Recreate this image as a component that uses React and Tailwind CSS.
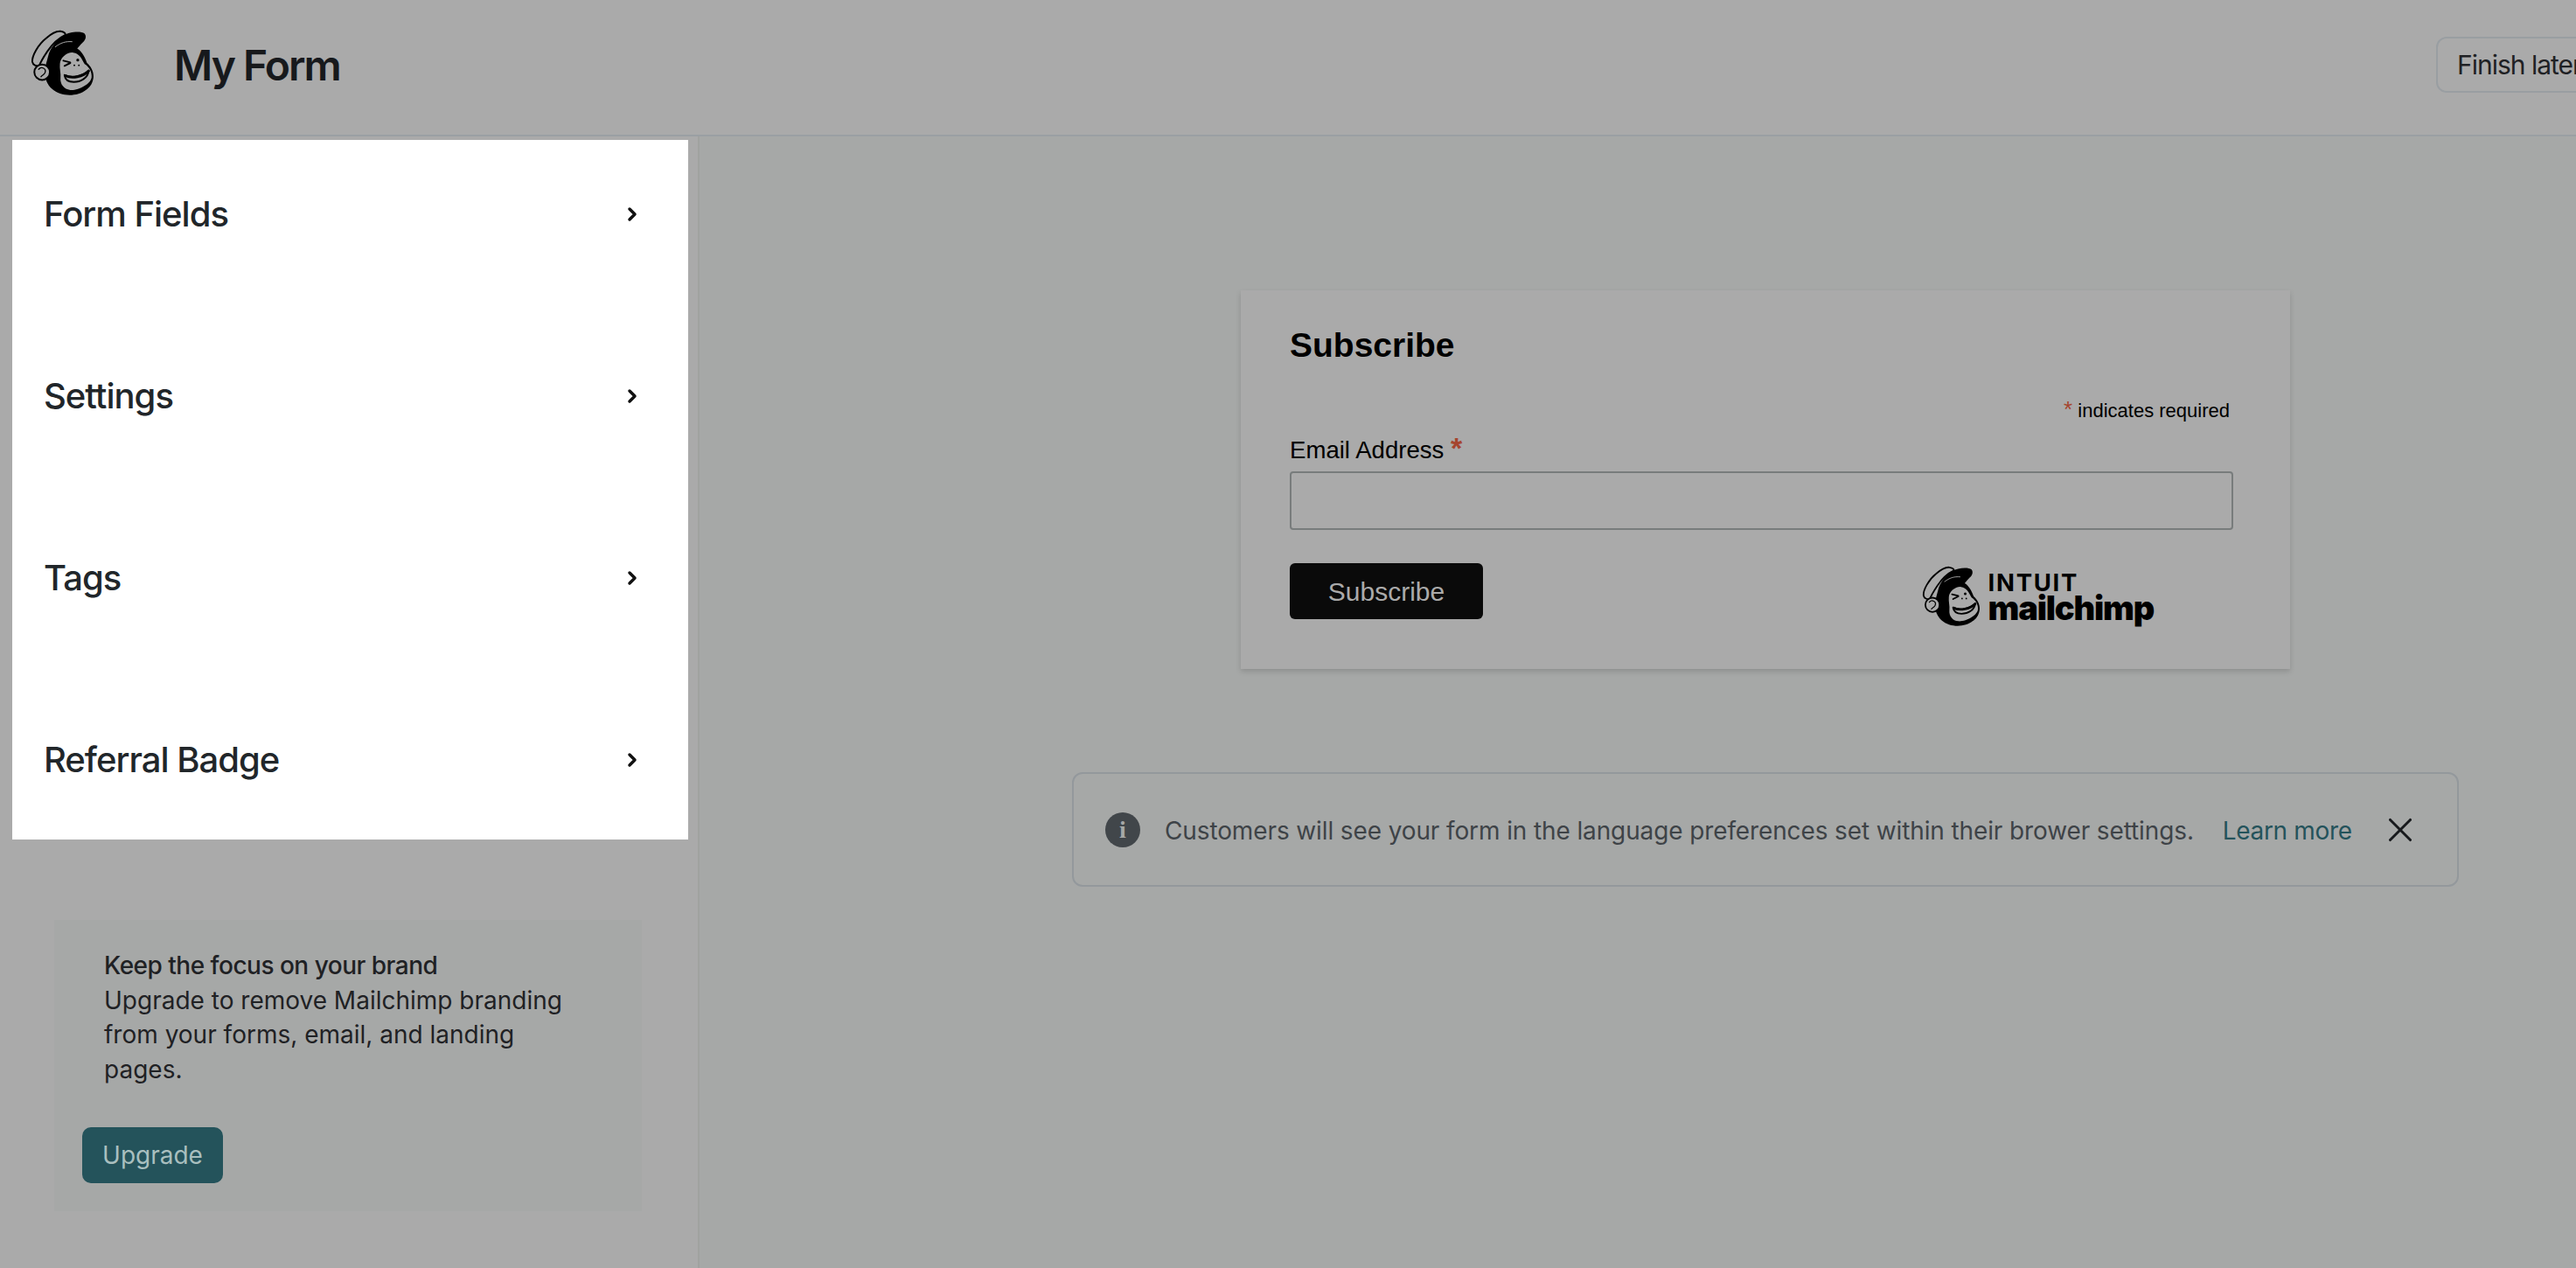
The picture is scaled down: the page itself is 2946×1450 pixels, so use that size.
import { ChevronRight, X } from "lucide-react";

const sections = ["Form Fields", "Settings", "Tags", "Referral Badge"];

// Freddie head, same drawing in the header and the form footer
const Freddie = ({ className }) => (
  <svg className={className} viewBox="-4 -4 222 236" fill="none">
    <path d="M2 110C0 90 22 50 50 28C66 14 84 2 100 4C110 6 118 10 117 16C100 24 74 44 54 74C42 92 30 112 26 124C16 126 4 122 2 110Z" fill="#aaaaaa" stroke="#000" strokeWidth="6" />
    <path d="M112 18C130 6 170 2 184 12C192 22 186 36 176 44C168 52 164 58 158 64C170 70 184 90 192 114C206 126 218 146 214 168C210 190 200 200 188 208C160 230 104 234 70 204C54 190 46 170 46 150C40 150 52 110 60 80C72 50 92 30 112 18Z" fill="#000" />
    <path d="M82 58C100 44 118 38 140 40" stroke="#aaaaaa" strokeWidth="3" strokeLinecap="round" />
    <path d="M98 116C100 96 122 76 144 78C166 80 174 100 184 118C200 128 210 146 208 164C206 186 164 210 134 208C112 206 98 188 100 166C102 150 96 134 98 116Z" fill="#aaaaaa" />
    <circle cx="36" cy="146" r="27" fill="#aaaaaa" stroke="#000" strokeWidth="6" />
    <path d="M24 136C34 124 52 134 46 148C42 156 36 156 32 162" stroke="#000" strokeWidth="4" strokeLinecap="round" />
    <path d="M110 106L134 112M114 124L134 114" stroke="#000" strokeWidth="6" strokeLinecap="round" />
    <circle cx="160" cy="104" r="5" fill="#000" />
    <circle cx="148" cy="122" r="3" fill="#000" />
    <circle cx="164" cy="122" r="3" fill="#000" />
    <path d="M114 156C140 168 178 160 198 140C196 166 170 180 146 180C128 180 116 172 114 156Z" fill="#aaaaaa" stroke="#000" strokeWidth="6" strokeLinejoin="round" />
    <path d="M116 158C140 170 178 162 198 142" stroke="#000" strokeWidth="9" strokeLinecap="round" />
  </svg>
);

const Header = () => (
  <header className="flex h-[156px] items-center border-b-2 border-[#9a9fa3] bg-[#aaaaaa] pb-[6px]">
    <Freddie className="mb-[4px] ml-[35px] h-[78px] w-[73px] shrink-0" />
    <h1 className="ml-[91px] mt-[2px] text-[48px] leading-none font-semibold tracking-[-2px] text-[#17191c]">My Form</h1>
    <button className="ml-auto mr-[-80px] h-[64px] w-[240px] shrink-0 rounded-[12px] border-2 border-[#999ea2] pl-[22px] text-left text-[30px] tracking-[-1px] text-[#1f2124]">
      Finish later
    </button>
  </header>
);

const Sidebar = () => (
  <aside className="w-[800px] shrink-0 border-r-2 border-[#a0a2a0] bg-[#aaaaaa] pl-[14px] pt-[4px]">
    <div className="flex w-[773px] flex-col gap-[38px] bg-white pb-[6px]">
      {sections.map((name) => (
        <div key={name} className="flex h-[170px] items-center justify-between pl-[36px] pr-[52px]">
          <span className="text-[40px] font-medium tracking-[-1px] text-[#21262a]">{name}</span>
          <ChevronRight className="size-[24px] text-[#111]" strokeWidth={3.5} />
        </div>
      ))}
    </div>
    <div className="ml-[48px] mt-[92px] w-[672px] bg-[#a6a8a7] pb-[32px] pl-[32px] pt-[33px]">
      <div className="w-[560px] pl-[25px] text-[28px] leading-[39.5px] text-[#1f2124]">
        <p className="font-medium tracking-[-0.5px]">Keep the focus on your brand</p>
        <p>Upgrade to remove Mailchimp branding from your forms, email, and landing pages.</p>
      </div>
      <button className="mt-[46px] block h-[64px] w-[161px] rounded-[10px] bg-[#24535b] text-[28px] text-[#a9bfbf]">
        Upgrade
      </button>
    </div>
  </aside>
);

const SubscribeCard = () => (
  <div className="ml-[619px] w-[1200px] bg-[#aaaaaa] pb-[47px] pl-[56px] pr-[65px] pt-[40px] font-['Liberation_Sans',sans-serif] text-black shadow-[0_3px_6px_rgba(0,0,0,0.15)]">
    <h2 className="text-[39px] leading-[46px] font-bold">Subscribe</h2>
    <p className="mt-[37px] pr-[4px] text-right text-[22px] leading-[26px]">
      <span className="text-[26px] leading-[26px] text-[#a5452f]">*</span> indicates required
    </p>
    <label className="mt-[11px] block h-[36px] text-[27.6px] leading-[36px]">
      Email Address <span className="text-[34px] leading-[36px] font-bold text-[#a5452f]">*</span>
    </label>
    <div className="mt-[9px] h-[67px] rounded-[4px] border-2 border-[#787c7c]" />
    <div className="mt-[38px] flex items-start justify-between">
      <button className="h-[64px] w-[221px] rounded-[6px] bg-[#0a0a0a] text-[30px] text-[#aaaaaa]">Subscribe</button>
      <div className="mr-[91px] flex items-start">
        <Freddie className="mt-[2px] h-[72px] w-[67px]" />
        <div className="ml-[9px] mt-[10px] font-['Inter',sans-serif] text-black">
          <div className="text-[27.5px] leading-[24px] font-bold tracking-[1.7px]">INTUIT</div>
          <div className="text-[38px] leading-[34px] font-black tracking-[-1.2px]">mailchimp</div>
        </div>
      </div>
    </div>
  </div>
);

const Notice = () => (
  <div className="ml-[426px] mt-[118px] flex h-[131px] w-[1586px] items-center rounded-[12px] border-2 border-[#93989c] pb-[-2px] pl-[36px]">
    <span className="flex size-[40px] shrink-0 items-center justify-center rounded-full bg-[#41464a] font-['Liberation_Serif',serif] text-[28px] font-bold text-[#a6a8a7]">
      i
    </span>
    <p className="ml-[28px] mt-[2px] text-[28px] tracking-[-0.12px] text-[#3e4347]">
      Customers will see your form in the language preferences set within their brower settings.
    </p>
    <a className="ml-[33px] mt-[2px] text-[28px] tracking-[-0.35px] text-[#24535b]">Learn more</a>
    <X className="ml-[32px] size-[46px] text-[#17191c]" strokeWidth={1.6} />
  </div>
);

export default function App() {
  return (
    <div className="h-[1450px] w-[2946px] overflow-hidden bg-[#a6a8a7] font-['Inter',sans-serif]">
      <Header />
      <div className="flex h-[1294px]">
        <Sidebar />
        <main className="flex-1 pt-[176px]">
          <SubscribeCard />
          <Notice />
        </main>
      </div>
    </div>
  );
}
